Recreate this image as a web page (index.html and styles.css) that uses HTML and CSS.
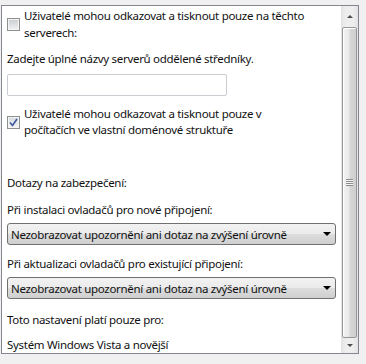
FILE: index.html
```html
<!DOCTYPE html>
<html lang="cs">
<head>
    <meta charset="UTF-8">
    <title>Nastavení tisku</title>
    <link rel="stylesheet" href="styles.css">
</head>
<body>
    <div class="panel">
        <div class="content">
            <label class="check-row cb1">
                <span class="checkbox"></span>
                <span class="check-label">Uživatelé mohou odkazovat a tisknout pouze na těchto<br>serverech:</span>
            </label>

            <p class="line servers-hint">Zadejte úplné názvy serverů oddělené středníky.</p>
            <div class="textbox"></div>

            <label class="check-row cb2">
                <span class="checkbox checked">
                    <svg width="9" height="9" viewBox="0 0 9 9"><path d="M1 4.5 L3.5 7.5 L8 1" fill="none" stroke="#3c57a0" stroke-width="1.6"/></svg>
                </span>
                <span class="check-label">Uživatelé mohou odkazovat a tisknout pouze v<br>počítačích ve vlastní doménové struktuře</span>
            </label>

            <p class="line security">Dotazy na zabezpečení:</p>

            <p class="line field-label">Při instalaci ovladačů pro nové připojení:</p>
            <div class="dropdown">
                <span>Nezobrazovat upozornění ani dotaz na zvýšení úrovně</span>
                <span class="caret"></span>
            </div>

            <p class="line field-label">Při aktualizaci ovladačů pro existující připojení:</p>
            <div class="dropdown">
                <span>Nezobrazovat upozornění ani dotaz na zvýšení úrovně</span>
                <span class="caret"></span>
            </div>

            <p class="line applies">Toto nastavení platí pouze pro:</p>
            <p class="line os">Systém Windows Vista a novější</p>
        </div>

        <div class="scrollbar">
            <div class="sb-btn"><span class="sb-arrow up"></span></div>
            <div class="sb-thumb"><span class="grip"></span></div>
            <div class="sb-btn"><span class="sb-arrow down"></span></div>
        </div>
    </div>
</body>
</html>
```

FILE: styles.css
```css
body {
    margin: 0;
    background: #f0f0f0;
    font-family: "Noto Sans", sans-serif;
    font-size: 11.5px;
    letter-spacing: -0.3px;
    color: #111;
}
.panel {
    display: flex;
    width: 358px;
    height: 349px;
    box-sizing: border-box;
    margin: 5px 0 0 1px;
    border: 1px solid #828790;
    background: #fff;
    overflow: hidden;
}
.content {
    flex: 1;
    padding-left: 5px;
    white-space: nowrap;
}
.line {
    margin: 0;
    line-height: 16px;
}

/* checkboxes */
.check-row {
    display: flex;
    align-items: center;
    gap: 4px;
}
.check-row.cb1 { margin-top: 1px; line-height: 17px; }
.check-row.cb2 { margin-top: 10px; line-height: 16px; }
.checkbox {
    width: 13px;
    height: 13px;
    box-sizing: border-box;
    border: 1px solid #8e8f8f;
    background: linear-gradient(#c8ccd2, #f2f2f2);
    box-shadow: inset 0 0 0 1px #f4f4f4;
    display: flex;
    align-items: center;
    justify-content: center;
    flex: none;
}
.checkbox.checked {
    background: linear-gradient(#d4d8de, #f6f6f6);
}

.servers-hint { margin-top: 10px; }
.textbox {
    width: 220px;
    height: 22px;
    box-sizing: border-box;
    margin-top: 7px;
    border: 1px solid #c9ccd1;
    border-radius: 2px;
}

.security { margin-top: 37px; }
.field-label { margin-top: 11px; }
.dropdown {
    display: flex;
    align-items: center;
    justify-content: space-between;
    width: 329px;
    height: 22px;
    box-sizing: border-box;
    margin-top: 5px;
    padding: 0 4px 0 3px;
    border: 1px solid #707070;
    border-radius: 3px;
    background: linear-gradient(#f2f2f2 0%, #ebebeb 50%, #dddddd 50%, #cfcfcf 100%);
}
.caret {
    width: 0;
    height: 0;
    border-left: 4px solid transparent;
    border-right: 4px solid transparent;
    border-top: 4px solid #000;
}
.applies { margin-top: 13px; }
.os { margin-top: 9px; }

/* scrollbar */
.scrollbar {
    width: 17px;
    flex: none;
    display: flex;
    flex-direction: column;
    background: linear-gradient(90deg, #e3e3e3, #eeeeee 30%, #eeeeee 70%, #e3e3e3);
}
.sb-btn {
    height: 21px;
    display: flex;
    align-items: center;
    justify-content: center;
}
.sb-btn:last-child { height: 15px; }
.sb-arrow {
    width: 0;
    height: 0;
    border-left: 3px solid transparent;
    border-right: 3px solid transparent;
}
.sb-arrow.up { border-bottom: 3px solid #4d4d4d; }
.sb-arrow.down { border-top: 3px solid #4d4d4d; }
.sb-thumb {
    flex: 1;
    margin: 0 1px;
    border: 1px solid #979797;
    border-radius: 2px;
    background: linear-gradient(90deg, #f4f4f4, #e8e8e8 45%, #d6d6d6 55%, #cfcfcf);
    box-shadow: inset 1px 1px 0 #fff;
    display: flex;
    align-items: center;
    justify-content: center;
}
.grip {
    width: 7px;
    height: 7px;
    background: repeating-linear-gradient(#8a8a8a 0 1px, #f6f6f6 1px 2px);
}
```
